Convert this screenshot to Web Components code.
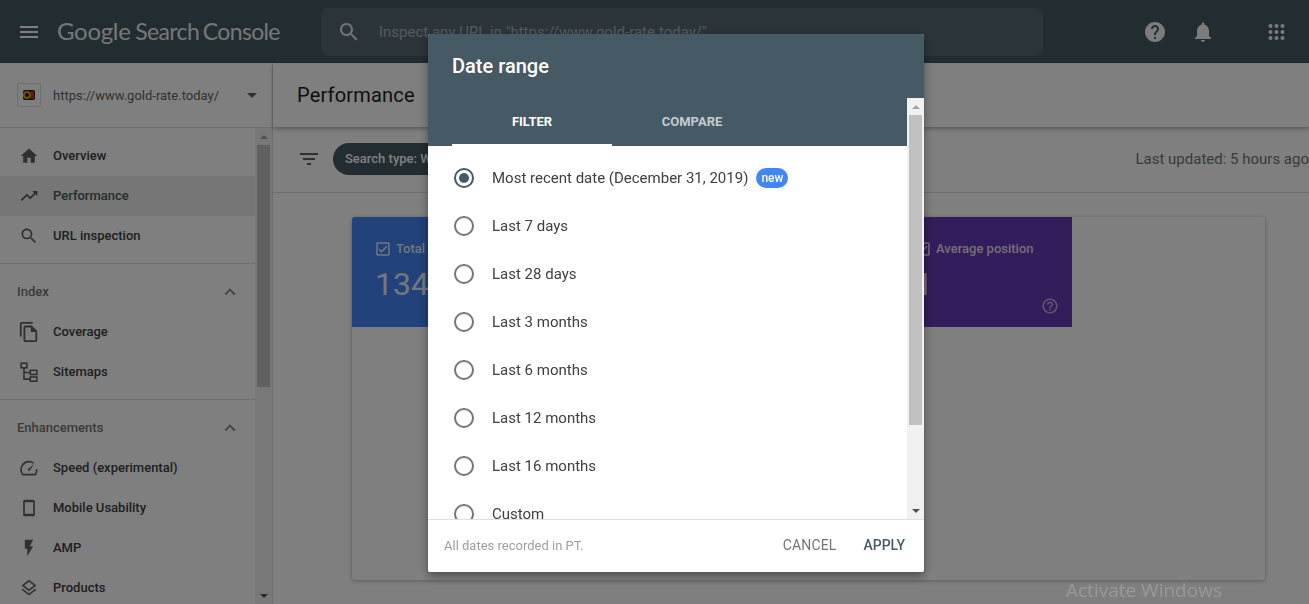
<!DOCTYPE html>
<html lang="en"><head><meta charset="utf-8"><title>Performance</title>
<style>
html,body{margin:0;height:100%;overflow:hidden;background:#fff;font-family:Roboto,"Liberation Sans",sans-serif}
</style></head><body>
<gsc-app></gsc-app>
<script>
const P={
menu:'M3 18h18v-2H3v2zm0-5h18v-2H3v2zm0-7v2h18V6H3z',
search:'M15.5 14h-.79l-.28-.27C15.41 12.59 16 11.11 16 9.5 16 5.91 13.09 3 9.5 3S3 5.91 3 9.5 5.91 16 9.5 16c1.61 0 3.09-.59 4.23-1.57l.27.28v.79l5 4.99L20.49 19l-4.99-5zm-6 0C7.01 14 5 11.99 5 9.5S7.01 5 9.5 5 14 7.01 14 9.5 11.99 14 9.5 14z',
help:'M12 2C6.48 2 2 6.48 2 12s4.48 10 10 10 10-4.48 10-10S17.52 2 12 2zm1 17h-2v-2h2v2zm2.07-7.75l-.9.92C13.45 12.9 13 13.5 13 15h-2v-.5c0-1.1.45-2.1 1.17-2.83l1.24-1.26c.37-.36.59-.86.59-1.41 0-1.1-.9-2-2-2s-2 .9-2 2H8c0-2.21 1.79-4 4-4s4 1.79 4 4c0 .88-.36 1.68-.93 2.25z',
bell:'M12 22c1.1 0 2-.9 2-2h-4c0 1.1.89 2 2 2zm6-6v-5c0-3.07-1.64-5.64-4.5-6.32V4c0-.83-.67-1.5-1.5-1.5s-1.5.67-1.5 1.5v.68C7.63 5.36 6 7.92 6 11v5l-2 2v1h16v-1l-2-2z',
home:'M10 20v-6h4v6h5v-8h3L12 3 2 12h3v8z',
trend:'M16 6l2.29 2.29-4.88 4.88-4-4L2 16.59 3.41 18l6-6 4 4 6.3-6.29L22 12V6z',
copy:'M16 1H4c-1.1 0-2 .9-2 2v14h2V3h12V1zm-1 4H8c-1.1 0-1.99.9-1.99 2L6 21c0 1.1.89 2 1.99 2H19c1.1 0 2-.9 2-2V11l-6-6zM8 21V7h6v5h5v9H8z',
phone:'M17 2H7c-1.1 0-2 .9-2 2v16c0 1.1.9 2 2 2h10c1.1 0 2-.9 2-2V4c0-1.1-.9-2-2-2zm0 17H7V5h10v14z',
bolt:'M7 2v11h3v9l7-12h-4l4-8z',
layers:'M11.99 18.54l-7.37-5.73L3 14.07l9 7 9-7-1.63-1.27-7.38 5.74zM12 16l7.36-5.73L21 9l-9-7-9 7 1.63 1.27L12 16zm0-11.47L17.74 9 12 13.47 6.26 9 12 4.53z',
up:'M7.41 15.41L12 10.83l4.59 4.58L18 14l-6-6-6 6z',
caret:'M7 10l5 5 5-5z',
filter:'M10 18h4v-2h-4v2zM3 6v2h18V6H3zm3 7h12v-2H6v2z',
check:'M19 3H5c-1.1 0-2 .9-2 2v14c0 1.1.9 2 2 2h14c1.1 0 2-.9 2-2V5c0-1.1-.9-2-2-2zm0 16H5V5h14v14zM17.99 9l-1.41-1.42-6.59 6.59-2.58-2.570-1.42 1.41 4 3.99z',
helpo:'M11 18h2v-2h-2v2zm1-16C6.48 2 2 6.48 2 12s4.48 10 10 10 10-4.48 10-10S17.52 2 12 2zm0 18c-4.41 0-8-3.59-8-8s3.59-8 8-8 8 3.59 8 8-3.59 8-8 8zm0-14c-2.21 0-4 1.790-4 4h2c0-1.1.9-2 2-2s2 .9 2 2c0 2-3 1.75-3 5h2c0-2.25 3-2.5 3-5 0-2.21-1.79-4-4-4z'
};
const EXTRA={
apps:'<g fill="currentColor"><circle cx="5.500" cy="6" r="2"/><circle cx="11.500" cy="6" r="2"/><circle cx="17.500" cy="6" r="2"/><circle cx="5.500" cy="12" r="2"/><circle cx="11.500" cy="12" r="2"/><circle cx="17.500" cy="12" r="2"/><circle cx="5.500" cy="18" r="2"/><circle cx="11.500" cy="18" r="2"/><circle cx="17.500" cy="18" r="2"/></g>',
sitemap:'<g fill="none" stroke="currentColor" stroke-width="1.900"><rect x="2.500" y="1.500" width="7" height="5.500"/><rect x="13.500" y="10" width="8" height="5"/><rect x="13.500" y="18" width="8" height="5"/><path d="M6 7V20.500H13.500M6 12.500H13.500"/></g>',
speed:'<g fill="none" stroke="currentColor" stroke-width="2"><path d="M17.600 6.200A9.600 9.600 0 0 0 4.500 20H19.500A9.600 9.600 0 0 0 21.300 13.500"/></g><path fill="currentColor" d="M10.700 13.600L18.500 7l-5.900 8.200a1.300 1.300 0 0 1-1.900-1.600z"/>'
};
class GscIcon extends HTMLElement{
  connectedCallback(){
    const n=this.getAttribute('name');
    const body=P[n]?`<path fill="currentColor" d="${P[n]}"/>`:EXTRA[n];
    this.attachShadow({mode:'open'}).innerHTML=`<style>:host{display:inline-flex;width:var(--s,24px);height:var(--s,24px);flex:none}svg{width:100%;height:100%;display:block}</style><svg viewBox="0 0 24 24" aria-hidden="true">${body}</svg>`;
  }
}
customElements.define('gsc-icon',GscIcon);

class GscScrollbar extends HTMLElement{
  connectedCallback(){
    const gap=this.getAttribute('thumb');
    this.attachShadow({mode:'open'}).innerHTML=`<style>
    :host{display:flex;flex-direction:column;width:17px;flex:none;background:#f1f1f1;box-sizing:border-box}
    .b{height:17px;flex:none;display:flex;align-items:center;justify-content:center}
    .b i{width:0;height:0;border-left:4px solid transparent;border-right:4px solid transparent}
    .u i{border-bottom:4px solid #a3a3a3}.d i{border-top:4px solid #505050}
    .t{height:${gap}px;margin:0 2px;background:#c1c1c1;flex:none}.s{flex:1}
    </style><div class="b u"><i></i></div><div class="t"></div><div class="s"></div><div class="b d"><i></i></div>`;
  }
}
customElements.define('gsc-scrollbar',GscScrollbar);

class GscTopbar extends HTMLElement{
  constructor(){super();this.attachShadow({mode:'open'}).innerHTML=`<style>
  :host{display:flex;align-items:center;height:63px;flex:none;background:#455a64;color:#fff;box-sizing:border-box;padding-left:17px}
  .logo{margin:0 0 2px 16px;width:264px;font:400 23px/30px Lato,sans-serif;white-space:nowrap;letter-spacing:-.65px;word-spacing:-1.500px;color:rgba(255,255,255,.92)}
  .logo b{font-weight:400;font-size:24px;letter-spacing:-.3px;margin-right:1px}
  .box{display:flex;align-items:center;width:722px;height:48px;border-radius:8px;background:rgba(255,255,255,.1);box-sizing:border-box;padding-left:16px;font:400 15px Roboto,sans-serif;color:rgba(255,255,255,.5);white-space:nowrap;overflow:hidden}
  .box gsc-icon{margin-right:18px;color:rgba(255,255,255,.85)}
  .h{margin-left:100px}.n{margin-left:24px}.a{margin-left:50px}
  .r{color:rgba(255,255,255,.95)}
  </style><gsc-icon name="menu"></gsc-icon><div class="logo"><b>Google</b> Search Console</div>
  <div class="box"><gsc-icon name="search"></gsc-icon><span>Inspect any URL in "https://www.gold-rate.today/"</span></div>
  <gsc-icon class="r h" name="help"></gsc-icon><gsc-icon class="r n" name="bell"></gsc-icon><gsc-icon class="r a" name="apps"></gsc-icon>`}
}
customElements.define('gsc-topbar',GscTopbar);

class GscNavItem extends HTMLElement{
  constructor(){super();this.attachShadow({mode:'open'}).innerHTML=`<style>
  :host{display:flex;align-items:center;height:40px;padding-left:17px;font:500 13px/16px Roboto,sans-serif;color:#3c4043;white-space:nowrap}
  :host([active]){background:#ececec;color:#455a64}
  .i{width:24px;height:24px;margin-right:12px;display:flex;align-items:center;justify-content:center;color:#616161}
  :host([active]) .i{color:#455a64}
  .i gsc-icon{--s:var(--is,20px);color:inherit}
  </style><span class="i"></span><slot></slot>`}
  connectedCallback(){const i=document.createElement('gsc-icon');const n=this.getAttribute('icon');i.setAttribute('name',n);if(n==='copy')i.style.setProperty('--is','22px');this.shadowRoot.querySelector('.i').append(i)}
}
customElements.define('gsc-nav-item',GscNavItem);

class GscNavGroup extends HTMLElement{
  constructor(){super();this.attachShadow({mode:'open'}).innerHTML=`<style>
  :host{display:block;border-top:1px solid #dadce0}
  .h{display:flex;align-items:center;justify-content:space-between;height:48px;padding:7px 14px 0 17px;box-sizing:border-box;font:500 13px Roboto,sans-serif;color:#757575}
  gsc-icon{color:#8a8a8a;--s:22px}
  </style><div class="h"><span id="t"></span><gsc-icon name="up"></gsc-icon></div><slot></slot>`}
  connectedCallback(){this.shadowRoot.getElementById('t').textContent=this.getAttribute('label')}
}
customElements.define('gsc-nav-group',GscNavGroup);

class GscSidebar extends HTMLElement{
  constructor(){super();this.attachShadow({mode:'open'}).innerHTML=`<style>
  :host{display:flex;flex-direction:column;width:273px;flex:none;border-right:1px solid #dadce0;box-sizing:border-box;background:#fff;overflow:hidden}
  .prop{display:flex;align-items:center;height:65px;flex:none;padding-left:17px;border-bottom:1px solid #dadce0;box-sizing:border-box;font:400 13px Roboto,sans-serif;color:#5f6368;white-space:nowrap}
  .fav{width:24px;height:24px;border:1px solid #dadce0;border-radius:2px;box-sizing:border-box;display:flex;align-items:center;justify-content:center;margin-right:12px}
  .fav svg{width:16px;height:16px}
  .prop gsc-icon{margin-left:21px;color:#5f6368}
  .wrap{display:flex;flex:1;min-height:0}
  .list{flex:1;overflow:hidden}
  .first{padding:8px 0 7px}
  gsc-scrollbar{height:476px}
  </style>
  <div class="prop"><span class="fav"><svg viewBox="0 0 16 16"><rect x="2" y="3" width="12" height="10" rx="2" fill="#241800"/><circle cx="6" cy="8" r="3" fill="none" stroke="#e8a800" stroke-width="2"/><rect x="10" y="4" width="3" height="8" fill="#d8281c"/></svg></span><span>https://www.gold-rate.today/</span><gsc-icon name="caret"></gsc-icon></div>
  <div class="wrap"><div class="list"><div class="first">
    <gsc-nav-item icon="home">Overview</gsc-nav-item>
    <gsc-nav-item icon="trend" active>Performance</gsc-nav-item>
    <gsc-nav-item icon="search">URL inspection</gsc-nav-item></div>
    <gsc-nav-group label="Index"><gsc-nav-item icon="copy">Coverage</gsc-nav-item><gsc-nav-item icon="sitemap">Sitemaps</gsc-nav-item><div style="height:7px"></div></gsc-nav-group>
    <gsc-nav-group label="Enhancements"><gsc-nav-item icon="speed">Speed (experimental)</gsc-nav-item><gsc-nav-item icon="phone">Mobile Usability</gsc-nav-item><gsc-nav-item icon="bolt">AMP</gsc-nav-item><gsc-nav-item icon="layers">Products</gsc-nav-item></gsc-nav-group>
  </div><gsc-scrollbar thumb="242"></gsc-scrollbar></div>`}
}
customElements.define('gsc-sidebar',GscSidebar);

class GscTile extends HTMLElement{
  constructor(){super();this.attachShadow({mode:'open'}).innerHTML=`<style>
  :host{display:block;width:180px;height:110px;flex:none;box-sizing:border-box;padding:24px 0 0 24px;background:var(--c);color:#fff;position:relative}
  .l{display:flex;align-items:center;height:16px;font:500 13px/16px Roboto,sans-serif;white-space:nowrap;color:rgba(255,255,255,.85)}
  .l gsc-icon{--s:18px;margin:0 4px 0 -2px}
  .v{font:400 32px/40px Roboto,sans-serif;margin:7px 0 0 -1px;color:rgba(255,255,255,.9)}
  .q{position:absolute;right:13px;bottom:12px;--s:18px;color:rgba(255,255,255,.6)}
  </style><div class="l"><gsc-icon name="check"></gsc-icon><span id="a"></span></div><div class="v" id="b"></div><gsc-icon class="q" name="helpo"></gsc-icon>`}
  connectedCallback(){this.shadowRoot.getElementById('a').textContent=this.getAttribute('label')||'';this.shadowRoot.getElementById('b').textContent=this.getAttribute('value')||''}
}
customElements.define('gsc-tile',GscTile);

class GscMain extends HTMLElement{
  constructor(){super();this.attachShadow({mode:'open'}).innerHTML=`<style>
  :host{display:flex;flex-direction:column;flex:1;min-width:0;background:#fff;font-family:Roboto,sans-serif}
  .head{height:64px;flex:none;display:flex;align-items:center;padding-left:24px;box-sizing:border-box;font:400 20px Roboto,sans-serif;letter-spacing:.18px;color:#202124;box-shadow:0 2px 4px rgba(0,0,0,.3);position:relative}
  .bar{height:66px;flex:none;display:flex;align-items:center;padding:0 0 1px 24px;box-sizing:border-box;border-bottom:1px solid #dadce0}
  .bar gsc-icon{color:#5f6368;margin-right:12px}
  .chip{height:32px;border-radius:16px;background:#455a64;color:#fff;font:500 13px/31px Roboto,sans-serif;padding:0 12px;white-space:nowrap}
  .upd{margin-left:auto;font:400 15px Roboto,sans-serif;color:#757575;white-space:nowrap}
  .body{flex:1;padding:24px 44px 0 79px;min-height:0}
  .card{height:363px;background:#fff;border-radius:3px;box-shadow:0 1px 4px rgba(0,0,0,.3);display:flex;overflow:hidden}
  </style><div class="head">Performance</div>
  <div class="bar"><gsc-icon name="filter"></gsc-icon><span class="chip">Search type: Web</span><span class="upd">Last updated: 5 hours ago</span></div>
  <div class="body"><div class="card">
    <gsc-tile style="--c:#4285f4" label="Total" value="134"></gsc-tile>
    <gsc-tile style="--c:#5e35b1"></gsc-tile>
    <gsc-tile style="--c:#00897b"></gsc-tile>
    <gsc-tile style="--c:#673ab7" label="Average position" value="1"></gsc-tile>
  </div></div>`}
}
customElements.define('gsc-main',GscMain);

class GscRadio extends HTMLElement{
  constructor(){super();this.attachShadow({mode:'open'}).innerHTML=`<style>
  :host{display:flex;align-items:center;height:48px;padding-left:26px;font:400 15px/20px Roboto,sans-serif;color:#3c4043;white-space:nowrap;flex:none}
  .r{width:20px;height:20px;border:2px solid #757575;border-radius:50%;box-sizing:border-box;margin-right:18px;display:flex;align-items:center;justify-content:center;flex:none}
  :host([checked]) .r{border-color:#455a64}
  :host([checked]) .r::after{content:"";width:10px;height:10px;border-radius:50%;background:#455a64}
  </style><span class="r"></span><slot></slot>`}
}
customElements.define('gsc-radio',GscRadio);

class GscDialog extends HTMLElement{
  constructor(){super();this.attachShadow({mode:'open'}).innerHTML=`<style>
  :host{display:block;position:fixed;inset:0;background:rgba(0,0,0,.5)}
  .d{position:absolute;left:428px;top:34px;width:496px;height:538px;background:#fff;border-radius:2px;box-shadow:0 4px 10px rgba(0,0,0,.4);display:flex;flex-direction:column;overflow:hidden;font-family:Roboto,sans-serif}
  .t{height:64px;flex:none;background:#455a64;color:#fff;font:500 20px/64px Roboto,sans-serif;padding-left:24px}
  .m{flex:1;display:flex;min-height:0}
  .c{flex:1;min-width:0;display:flex;flex-direction:column;overflow:hidden}
  .tabs{height:48px;flex:none;background:#455a64;display:flex;padding-left:24px}
  .tab{width:160px;box-sizing:border-box;text-align:center;font:700 13px/48px Roboto,sans-serif;color:rgba(255,255,255,.7);border-bottom:2px solid transparent}
  .tab.on{color:#fff;border-bottom-color:#fff}
  .list{padding-top:8px;display:flex;flex-direction:column;overflow:hidden;flex:1}
  .new{display:inline-block;margin-left:8px;height:20px;border-radius:10px;background:#4285f4;color:#fff;font:500 12px/20px Roboto,sans-serif;padding:0 5px}
  .f{height:53px;flex:none;border-top:1px solid #e0e0e0;box-sizing:border-box;display:flex;align-items:center;padding:0 19px 2px 16px;font:400 13px Roboto,sans-serif;color:#9e9e9e}
  .f span:first-child{margin-right:auto}
  .b{font:400 14px Roboto,sans-serif}
  .cn{color:#757575;margin-right:27px;letter-spacing:.15px}.ap{color:#455a64;font-weight:500}
  </style><div class="d"><div class="t">Date range</div>
  <div class="m"><div class="c"><div class="tabs"><div class="tab on">FILTER</div><div class="tab">COMPARE</div></div>
  <div class="list">
   <gsc-radio checked>Most recent date (December 31, 2019)<span class="new">new</span></gsc-radio>
   <gsc-radio>Last 7 days</gsc-radio><gsc-radio>Last 28 days</gsc-radio><gsc-radio>Last 3 months</gsc-radio><gsc-radio>Last 6 months</gsc-radio><gsc-radio>Last 12 months</gsc-radio><gsc-radio>Last 16 months</gsc-radio><gsc-radio>Custom</gsc-radio>
  </div></div><gsc-scrollbar thumb="310"></gsc-scrollbar></div>
  <div class="f"><span>All dates recorded in PT.</span><span class="b cn">CANCEL</span><span class="b ap">APPLY</span></div></div>`}
}
customElements.define('gsc-dialog',GscDialog);

class GscApp extends HTMLElement{
  constructor(){super();this.attachShadow({mode:'open'}).innerHTML=`<style>
  :host{display:flex;flex-direction:column;height:100vh;overflow:hidden;position:relative}
  .w{flex:1;display:flex;min-height:0}
  .wm{position:fixed;left:1066px;top:577px;font:400 19px/26px "Open Sans",sans-serif;color:rgba(255,255,255,.2);white-space:nowrap;z-index:3}
  </style><gsc-topbar></gsc-topbar><div class="w"><gsc-sidebar></gsc-sidebar><gsc-main></gsc-main></div><gsc-dialog></gsc-dialog><div class="wm">Activate Windows</div>`}
}
customElements.define('gsc-app',GscApp);
</script></body></html>
